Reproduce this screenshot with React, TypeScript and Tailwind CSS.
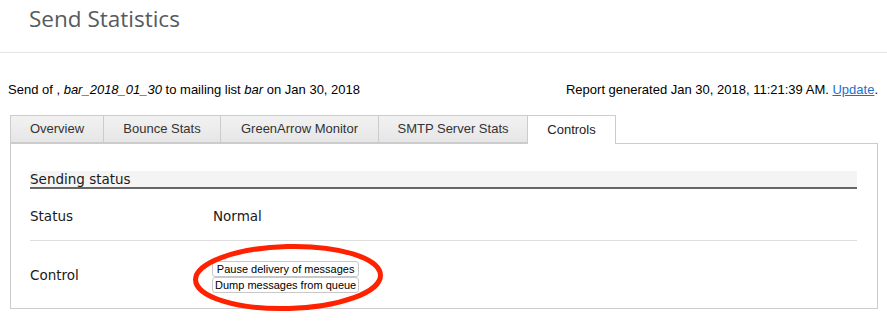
const tabs = [
  { label: "Overview", w: "w-[94px] border-l" },
  { label: "Bounce Stats", w: "w-[117px]" },
  { label: "GreenArrow Monitor", w: "w-[158px]" },
  { label: "SMTP Server Stats", w: "w-[149px]" },
  { label: "Controls", w: "w-[88px]" },
];

const ActionButton = ({ label }: { label: string }) => (
  <button className="block h-[16px] px-[2px] border border-[#c8c8c8] rounded-[3px] bg-white text-[11px] leading-[14px] text-black font-['Liberation_Sans',Arial,sans-serif]">
    {label}
  </button>
);

export default function App() {
  return (
    <div className="relative w-[887px] h-[321px] overflow-hidden bg-white">
      <div className="h-[53px] border-b border-[#e4e6ea] pl-[29px] pt-[3px]">
        <h1 className="text-[22.5px] leading-[32px] text-[#555b60] font-['Open_Sans',sans-serif]">Send Statistics</h1>
      </div>

      <div className="pl-[8px] pr-[9px] font-['Liberation_Sans',Arial,sans-serif] text-[13px] text-black">
        <div className="mt-[29px] flex justify-between leading-[16px]">
          <div>
            Send of , <i>bar_2018_01_30</i> to mailing list <i>bar</i> on Jan 30, 2018
          </div>
          <div>
            Report generated Jan 30, 2018, 11:21:39 AM.{" "}
            <a href="#" className="text-[#1a6fcf] underline">Update</a>.
          </div>
        </div>

        <div className="ml-[2px] mt-[17px] flex">
          {tabs.map((t) => {
            const active = t.label === "Controls";
            return (
              <div
                key={t.label}
                className={
                  active
                    ? `${t.w} relative z-10 -mb-px h-[29px] text-center border-t border-r border-[#cccccc] bg-white text-[#222] leading-[28px]`
                    : `${t.w} h-[28px] text-center border-t border-r border-b border-[#cccccc] bg-gradient-to-b from-[#f2f2f2] to-[#e6e6e6] text-[#333] leading-[26px]`
                }
              >
                {t.label}
              </div>
            );
          })}
        </div>

        <div className="ml-[2px] h-[166px] border border-[#cccccc] pl-[19px] pr-[20px] pt-[27px] font-['DejaVu_Sans',Verdana,sans-serif] text-[13.5px] text-[#1a1a1a]">
          <div className="h-[18px] bg-[#f4f4f4] border-b-2 border-[#666] leading-[16px]">Sending status</div>
          <div className="flex h-[52px] items-center pt-[3px] border-b border-[#dddddd]">
            <div className="w-[183px]">Status</div>
            <div>Normal</div>
          </div>
          <div className="flex pt-[20px]">
            <div className="w-[182px] pt-[4px]">Control</div>
            <div className="flex flex-col">
              <ActionButton label="Pause delivery of messages" />
              <ActionButton label="Dump messages from queue" />
            </div>
          </div>
        </div>
      </div>

      <svg className="pointer-events-none absolute left-0 top-0" width="887" height="321">
        <ellipse cx="288" cy="277.5" rx="92.5" ry="31" fill="none" stroke="#ff2200" strokeWidth="5" transform="rotate(-1.5 288 277.5)" />
      </svg>
    </div>
  );
}
